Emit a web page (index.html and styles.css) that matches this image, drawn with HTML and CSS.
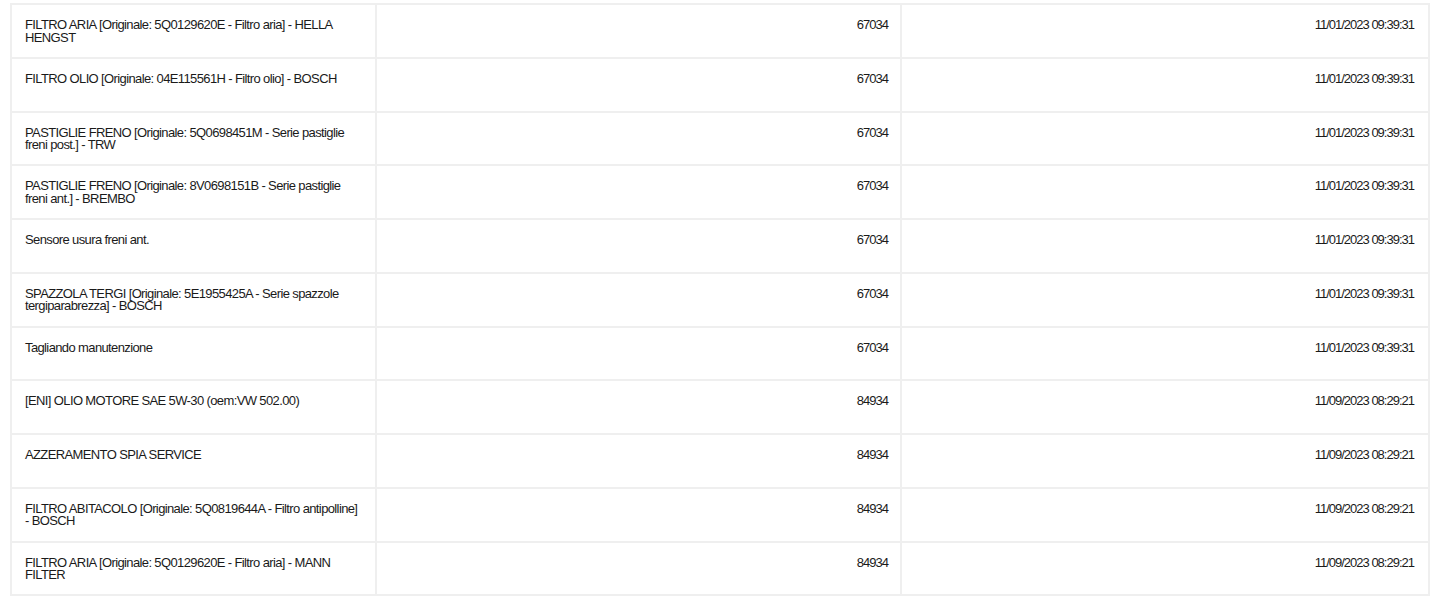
FILE: index.html
```html
<!DOCTYPE html>
<html lang="it">
<head>
<meta charset="utf-8">
<title>Interventi</title>
<link rel="stylesheet" href="styles.css">
</head>
<body>
<table class="items">
  <colgroup>
    <col class="c-desc">
    <col class="c-km">
    <col class="c-date">
  </colgroup>
  <tbody>
    <tr><td class="desc">FILTRO ARIA [Originale: 5Q0129620E - Filtro aria] - HELLA HENGST</td><td class="num">67034</td><td class="num date">11/01/2023 09:39:31</td></tr>
    <tr><td class="desc">FILTRO OLIO [Originale: 04E115561H - Filtro olio] - BOSCH</td><td class="num">67034</td><td class="num date">11/01/2023 09:39:31</td></tr>
    <tr><td class="desc">PASTIGLIE FRENO [Originale: 5Q0698451M - Serie pastiglie freni post.] - TRW</td><td class="num">67034</td><td class="num date">11/01/2023 09:39:31</td></tr>
    <tr><td class="desc">PASTIGLIE FRENO [Originale: 8V0698151B - Serie pastiglie freni ant.] - BREMBO</td><td class="num">67034</td><td class="num date">11/01/2023 09:39:31</td></tr>
    <tr><td class="desc">Sensore usura freni ant.</td><td class="num">67034</td><td class="num date">11/01/2023 09:39:31</td></tr>
    <tr><td class="desc">SPAZZOLA TERGI [Originale: 5E1955425A - Serie spazzole tergiparabrezza] - BOSCH</td><td class="num">67034</td><td class="num date">11/01/2023 09:39:31</td></tr>
    <tr><td class="desc">Tagliando manutenzione</td><td class="num">67034</td><td class="num date">11/01/2023 09:39:31</td></tr>
    <tr><td class="desc">[ENI] OLIO MOTORE SAE 5W-30 (oem:VW 502.00)</td><td class="num">84934</td><td class="num date">11/09/2023 08:29:21</td></tr>
    <tr><td class="desc">AZZERAMENTO SPIA SERVICE</td><td class="num">84934</td><td class="num date">11/09/2023 08:29:21</td></tr>
    <tr><td class="desc">FILTRO ABITACOLO [Originale: 5Q0819644A - Filtro antipolline] - BOSCH</td><td class="num">84934</td><td class="num date">11/09/2023 08:29:21</td></tr>
    <tr><td class="desc">FILTRO ARIA [Originale: 5Q0129620E - Filtro aria] - MANN FILTER</td><td class="num">84934</td><td class="num date">11/09/2023 08:29:21</td></tr>
  </tbody>
</table>
</body>
</html>
```

FILE: styles.css
```css
html, body {
  margin: 0;
  padding: 0;
  background: #ffffff;
}

body {
  font-family: "Liberation Sans", Arial, sans-serif;
  font-size: 13px;
  color: #1a1a1a;
}

.items {
  border-collapse: collapse;
  table-layout: fixed;
  width: 1418px;
  margin: 3px 0 0 10px;
}

.c-desc { width: 365px; }
.c-km { width: 525px; }
.c-date { width: 528px; }

.items tr {
  height: 53.75px;
}

.items td {
  border: 2px solid #efefef;
  padding: 14px 14px 0 13px;
  vertical-align: top;
  line-height: 12.5px;
  letter-spacing: -0.62px;
}

.items td.num {
  text-align: right;
  padding-right: 12px;
  letter-spacing: -1px;
}

.items td.date {
  padding-right: 14px;
}
```
